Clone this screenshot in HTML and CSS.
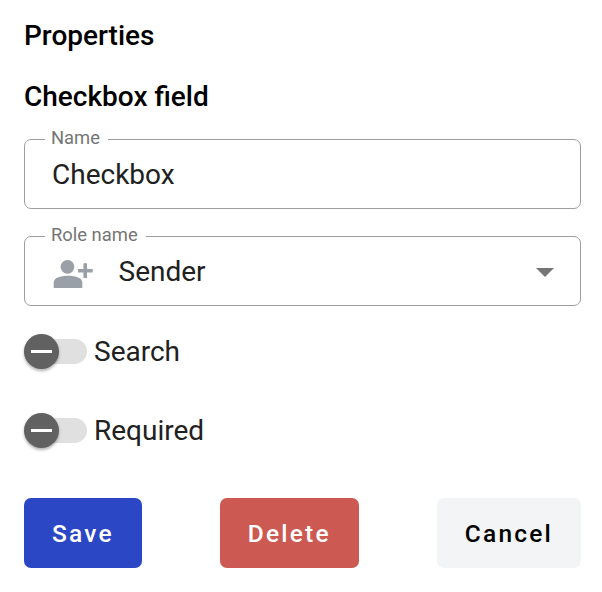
FILE: index.html
```html
<!DOCTYPE html>
<html lang="en">
<head>
<meta charset="utf-8">
<title>Properties</title>
<link rel="stylesheet" href="styles.css">
</head>
<body>
<main class="panel">
  <h1 class="heading">Properties</h1>
  <h2 class="heading heading-field">Checkbox field</h2>
  <fieldset class="field">
    <legend class="label">Name</legend>
    <div class="control"><span class="value">Checkbox</span></div>
  </fieldset>
  <fieldset class="field field-role">
    <legend class="label">Role name</legend>
    <div class="control">
      <svg class="person" viewBox="0 0 40 30" width="40" height="30">
        <circle cx="14.5" cy="7.8" r="6.9"/>
        <path d="M.7 29V23.5C.7 18.8 7 16.7 15 16.7S29.3 18.8 29.3 23.5V29Z"/>
        <path d="M30.4 4.3h3.6v5.7h5.7v3.4H34v5.6h-3.6v-5.6H25V10h5.4Z"/>
      </svg>
      <span class="value">Sender</span>
      <svg class="arrow" viewBox="0 0 18 9" width="18" height="9"><path d="M0 0h18L9 9Z"/></svg>
    </div>
  </fieldset>
  <div class="toggle">
    <span class="track"><span class="thumb"></span></span>
    <span class="toggle-label">Search</span>
  </div>
  <div class="toggle toggle-next">
    <span class="track"><span class="thumb"></span></span>
    <span class="toggle-label">Required</span>
  </div>
  <div class="actions">
    <button class="button save">Save</button>
    <button class="button delete">Delete</button>
    <button class="button cancel">Cancel</button>
  </div>
</main>
</body>
</html>
```
FILE: styles.css
```css
* { box-sizing: border-box; }
body {
  margin: 0;
  background: #fff;
  font-family: Roboto, "Liberation Sans", sans-serif;
}
.panel { padding: 19px 21px 0 24px; }
.heading {
  margin: 0;
  font-size: 28px;
  line-height: 33px;
  font-weight: 500;
  color: #000;
}
.heading-field { margin-top: 28px; }
.field {
  min-width: 0;
  height: 80px;
  margin: 16px 0 0;
  padding: 0;
  border: 1px solid #9e9e9e;
  border-radius: 7px;
}
.field-role { margin-top: 17px; }
.label {
  height: 21px;
  margin-left: 20px;
  padding: 0 8px 0 6px;
  font-size: 18.4px;
  line-height: 18px;
  color: #757575;
}
.control {
  display: flex;
  align-items: center;
  height: 50px;
  padding: 0 27px;
}
.value {
  font-size: 28px;
  line-height: 50px;
  color: #212121;
}
.person {
  margin: 4px 25.5px 0 1px;
  fill: #9aa0a8;
}
.arrow {
  margin: 0 -1px 0 auto;
  fill: #757575;
}
.toggle {
  display: flex;
  align-items: center;
  height: 35px;
  margin-top: 28px;
}
.toggle-next { margin-top: 44px; }
.track {
  display: flex;
  align-items: center;
  width: 63px;
  height: 24.5px;
  margin-top: -.5px;
  border-radius: 13px;
  background: #e0e0e0;
}
.thumb {
  display: flex;
  flex: none;
  align-items: center;
  justify-content: center;
  width: 35px;
  height: 35px;
  border-radius: 50%;
  background: #616161;
  box-shadow: 0 2px 3px rgba(0, 0, 0, .3);
}
.thumb::before {
  content: "";
  width: 21px;
  height: 3px;
  background: #fff;
}
.toggle-label {
  margin-left: 7px;
  font-size: 28px;
  line-height: 35px;
  color: #212121;
}
.actions {
  display: flex;
  justify-content: space-between;
  margin-top: 50px;
}
.button {
  height: 70px;
  padding: 1px 28px 0;
  border: 0;
  border-radius: 7px;
  font: 500 24.5px/69px Roboto, "Liberation Sans", sans-serif;
  letter-spacing: 2.19px;
}
.save { background: #2b47c5; color: #fff; }
.delete { background: #cc5952; color: #fff; }
.cancel { background: #f3f4f6; color: #000; }
```
